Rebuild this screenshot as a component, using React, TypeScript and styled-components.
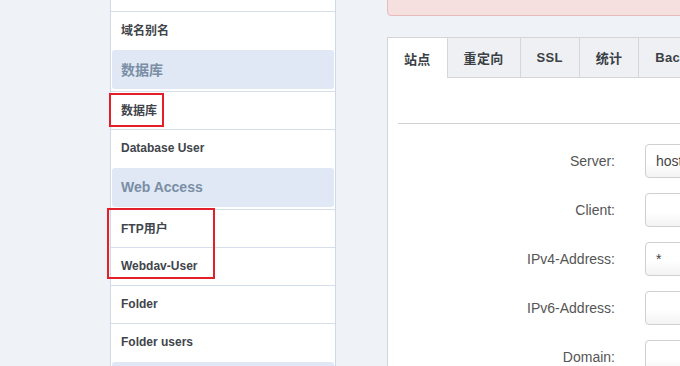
import React from 'react';
import styled, { createGlobalStyle } from 'styled-components';

const GlobalStyle = createGlobalStyle`
  html, body {
    margin: 0;
    padding: 0;
    background: #eff3f7;
    overflow: hidden;
  }
  body {
    font-family: "Liberation Sans", Arial, "Noto Sans CJK SC", sans-serif;
  }
`;

type NavEntry = { label: string; header?: boolean };

const nav: NavEntry[] = [
  { label: '子域名' },
  { label: '域名别名' },
  { label: '数据库', header: true },
  { label: '数据库' },
  { label: 'Database User' },
  { label: 'Web Access', header: true },
  { label: 'FTP用户' },
  { label: 'Webdav-User' },
  { label: 'Folder' },
  { label: 'Folder users' },
  { label: 'Mail', header: true },
];

const tabs = ['站点', '重定向', 'SSL', '统计', 'Backup', 'Options'];

const fields = [
  { label: 'Server:', value: 'hostname' },
  { label: 'Client:', value: '' },
  { label: 'IPv4-Address:', value: '*' },
  { label: 'IPv6-Address:', value: '' },
  { label: 'Domain:', value: '' },
];

const App = () => {
  return (
    <Root>
      <GlobalStyle />
      <Page>
        <Sidebar>
          {nav.map((n, i) =>
            n.header ? (
              <NavHeader key={i}>{n.label}</NavHeader>
            ) : (
              <NavItem key={i}>{n.label}</NavItem>
            )
          )}
        </Sidebar>
        <Content>
          <Alert />
          <Panel>
            <TabBar>
              {tabs.map((t, i) => (
                <Tab key={t} $active={i === 0}>
                  {t}
                </Tab>
              ))}
            </TabBar>
            <PanelBody>
              <Legend />
              <Form>
                {fields.map((f) => (
                  <React.Fragment key={f.label}>
                    <Label>{f.label}</Label>
                    <Input defaultValue={f.value} />
                  </React.Fragment>
                ))}
              </Form>
            </PanelBody>
          </Panel>
        </Content>
      </Page>
      <Marker style={{ left: 109, top: 93, width: 55, height: 34 }} />
      <Marker style={{ left: 107, top: 208, width: 108, height: 71 }} />
    </Root>
  );
};

export default App;

const Root = styled.div`
  position: relative;
  width: 680px;
  height: 366px;
  overflow: hidden;
`;

const Page = styled.div`
  display: flex;
  align-items: flex-start;
  gap: 51px;
  padding-left: 110px;
  width: 1200px;
`;

const Sidebar = styled.nav`
  flex: 0 0 224px;
  margin-top: -27px;
  background: #fff;
  border-left: 1px solid #cdd9e7;
  border-right: 1px solid #cdd9e7;
  display: flex;
  flex-direction: column;
`;

const NavItem = styled.div`
  box-sizing: border-box;
  height: 38px;
  padding: 0 0 2px 10px;
  border-top: 1px solid #d6e0eb;
  display: flex;
  align-items: center;
  font-size: 12px;
  font-weight: bold;
  color: #3f454b;
`;

const NavHeader = styled.div`
  box-sizing: border-box;
  height: 39px;
  margin: 1px 1px 2px;
  padding: 0 0 2px 9px;
  border-radius: 3px;
  background: #dfe8f4;
  display: flex;
  align-items: center;
  font-size: 14px;
  font-weight: bold;
  color: #7a8ea5;
`;

const Content = styled.div`
  flex: 0 0 700px;
  margin-top: -30px;
  display: flex;
  flex-direction: column;
  gap: 21px;
`;

const Alert = styled.div`
  height: 44px;
  background: #f6dfdf;
  border: 1px solid #e7bcbc;
  border-radius: 4px;
`;

const Panel = styled.section`
  background: #fff;
  border: 1px solid #d5d5d5;
  height: 400px;
`;

const TabBar = styled.ul`
  display: flex;
  margin: 0;
  padding: 0;
  list-style: none;
`;

const Tab = styled.li<{ $active?: boolean }>`
  height: ${(p) => (p.$active ? '40px' : '39px')};
  padding: 0 16px;
  display: flex;
  align-items: center;
  font-size: 13px;
  font-weight: bold;
  color: #3a3f45;
  background: ${(p) => (p.$active ? '#fff' : '#eef0f3')};
  border-right: 1px solid #d6d6d6;
  border-bottom: ${(p) => (p.$active ? 'none' : '1px solid #d6d6d6')};
  letter-spacing: 0.3px;
`;

const PanelBody = styled.div`
  padding: 0 10px;
`;

const Legend = styled.div`
  height: 45px;
  border-bottom: 1px solid #d2d2d2;
`;

const Form = styled.div`
  display: grid;
  grid-template-columns: 217px 300px;
  column-gap: 30px;
  row-gap: 15px;
  margin-top: 20px;
`;

const Label = styled.label`
  text-align: right;
  line-height: 34px;
  font-size: 14px;
  color: #555;
`;

const Input = styled.input`
  box-sizing: border-box;
  height: 34px;
  padding: 0 10px;
  border: 1px solid #d0d0d0;
  border-radius: 4px;
  background: linear-gradient(#ffffff 55%, #f3f3f3);
  font-family: "Liberation Sans", Arial, sans-serif;
  font-size: 14px;
  color: #444;
  outline: none;
`;

const Marker = styled.div`
  position: absolute;
  box-sizing: border-box;
  border: 2px solid #e3202a;
  pointer-events: none;
`;
